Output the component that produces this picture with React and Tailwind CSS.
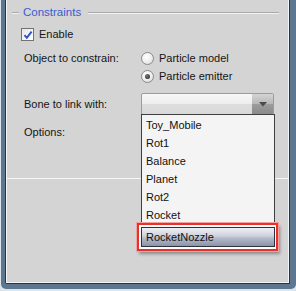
import React from "react";

const bones = ["Toy_Mobile", "Rot1", "Balance", "Planet", "Rot2", "Rocket"];

// Small radio circle
const Radio = ({ checked }) => (
  <span className="w-[13px] h-[13px] rounded-full border border-[#8a8a8a] bg-[radial-gradient(circle_at_40%_35%,#ffffff_0%,#ededed_55%,#cfcfcf_100%)] flex items-center justify-center">
    {checked && (
      <span className="w-[5px] h-[5px] rounded-full bg-[radial-gradient(circle_at_40%_35%,#7a7a7a,#1e1e1e)]" />
    )}
  </span>
);

// Combobox with its open list
const BoneSelect = () => (
  <div className="relative w-[133px]">
    <div className="h-[22px] flex border border-[#9c9c9c] rounded-[2px] overflow-hidden bg-[linear-gradient(to_bottom,#f7f7f7_0%,#eeeeee_48%,#dddddd_52%,#d9d9d9_100%)]">
      <div className="flex-1" />
      <div className="w-[21px] flex items-center justify-center bg-[linear-gradient(to_bottom,#d4d4d4_0%,#b8b8b8_48%,#9c9c9c_52%,#8a8a8a_100%)]">
        <svg width="8" height="5" viewBox="0 0 8 5">
          <path d="M0 0h8L4 4.5z" fill="#4a4a4a" />
        </svg>
      </div>
    </div>

    <div className="absolute left-0 top-[21px] w-[134px] bg-[#f4f4f4] border border-[#3f3f3f] pt-[1px] pb-[2px]">
      {bones.map((b) => (
        <div key={b} className="h-[18px] pl-[4px] flex items-center text-[#111]">
          {b}
        </div>
      ))}
      <div className="relative mt-[3px] -mx-[1px]">
        <div className="absolute -left-[4px] -top-[4px] -right-[3px] -bottom-[4px] border-2 border-[#e8302c] bg-white shadow-[0_0_0_1px_#f3a3a1,2px_3px_3px_rgba(0,0,0,0.35)]" />
        <div className="relative h-[20px] pl-[4px] flex items-center border border-[#2e323c] text-[#111] bg-[linear-gradient(to_bottom,#eef0f5_0%,#cdd1dc_45%,#b5bbca_55%,#8c94a8_100%)]">
          RocketNozzle
        </div>
      </div>
    </div>
  </div>
);

export default function App() {
  return (
    <div className="w-[296px] h-[291px] bg-[#dde4ea] font-['Liberation_Sans',Arial,sans-serif] text-[11px] text-[#151515] overflow-hidden">
      <div className="ml-[1px] w-[295px] h-[289px] bg-[#5e7790] pl-[4px] pr-[6px] pb-[5px] rounded-b-[5px]">
        <div className="h-full border-l border-r border-b border-[#2b3440] rounded-bl-[2px]">
          <div className="h-full border-l border-r border-b border-[#f4f4f4] bg-[#d4d4d4] flex flex-col">
            {/* Constraints group */}
            <div className="h-[179px] border-b border-[#f6f6f6]">
              <div className="mt-[6px] h-[14px] flex items-center pl-[5px] pr-[9px]">
                <div className="w-[7px] h-[2px] border-t border-[#a9a9a9] border-b border-b-[#f2f2f2]" />
                <span className="ml-[4px] text-[11.5px] text-[#3a5ccc]">Constraints</span>
                <div className="ml-[7px] flex-1 h-[2px] border-t border-[#a9a9a9] border-b border-b-[#f2f2f2]" />
              </div>

              <div className="mt-[8px] pl-[14px] flex items-center h-[13px]">
                <span className="w-[13px] h-[13px] border border-[#737373] bg-[linear-gradient(135deg,#e6e6e6,#ffffff)] flex items-center justify-center">
                  <svg width="10" height="10" viewBox="0 0 10 10">
                    <path d="M1.5 5.2l2.3 2.6L8.6 1.6" fill="none" stroke="#2f4fc4" strokeWidth="1.9" />
                  </svg>
                </span>
                <span className="ml-[5px]">Enable</span>
              </div>

              <div className="mt-[8px] pl-[17px] grid grid-cols-[117px_1fr]">
                <div className="h-[18px] flex items-center">Object to constrain:</div>
                <div className="flex flex-col">
                  <div className="h-[18px] flex items-center gap-[5px]">
                    <Radio />
                    <span>Particle model</span>
                  </div>
                  <div className="h-[18px] flex items-center gap-[5px]">
                    <Radio checked />
                    <span>Particle emitter</span>
                  </div>
                </div>

                <div className="mt-[8px] h-[22px] flex items-center">Bone to link with:</div>
                <div className="mt-[8px] relative z-10">
                  <BoneSelect />
                </div>

                <div className="mt-[8px] h-[18px] flex items-center">Options:</div>
                <div />
              </div>
            </div>
            <div className="flex-1" />
          </div>
        </div>
      </div>
    </div>
  );
}
